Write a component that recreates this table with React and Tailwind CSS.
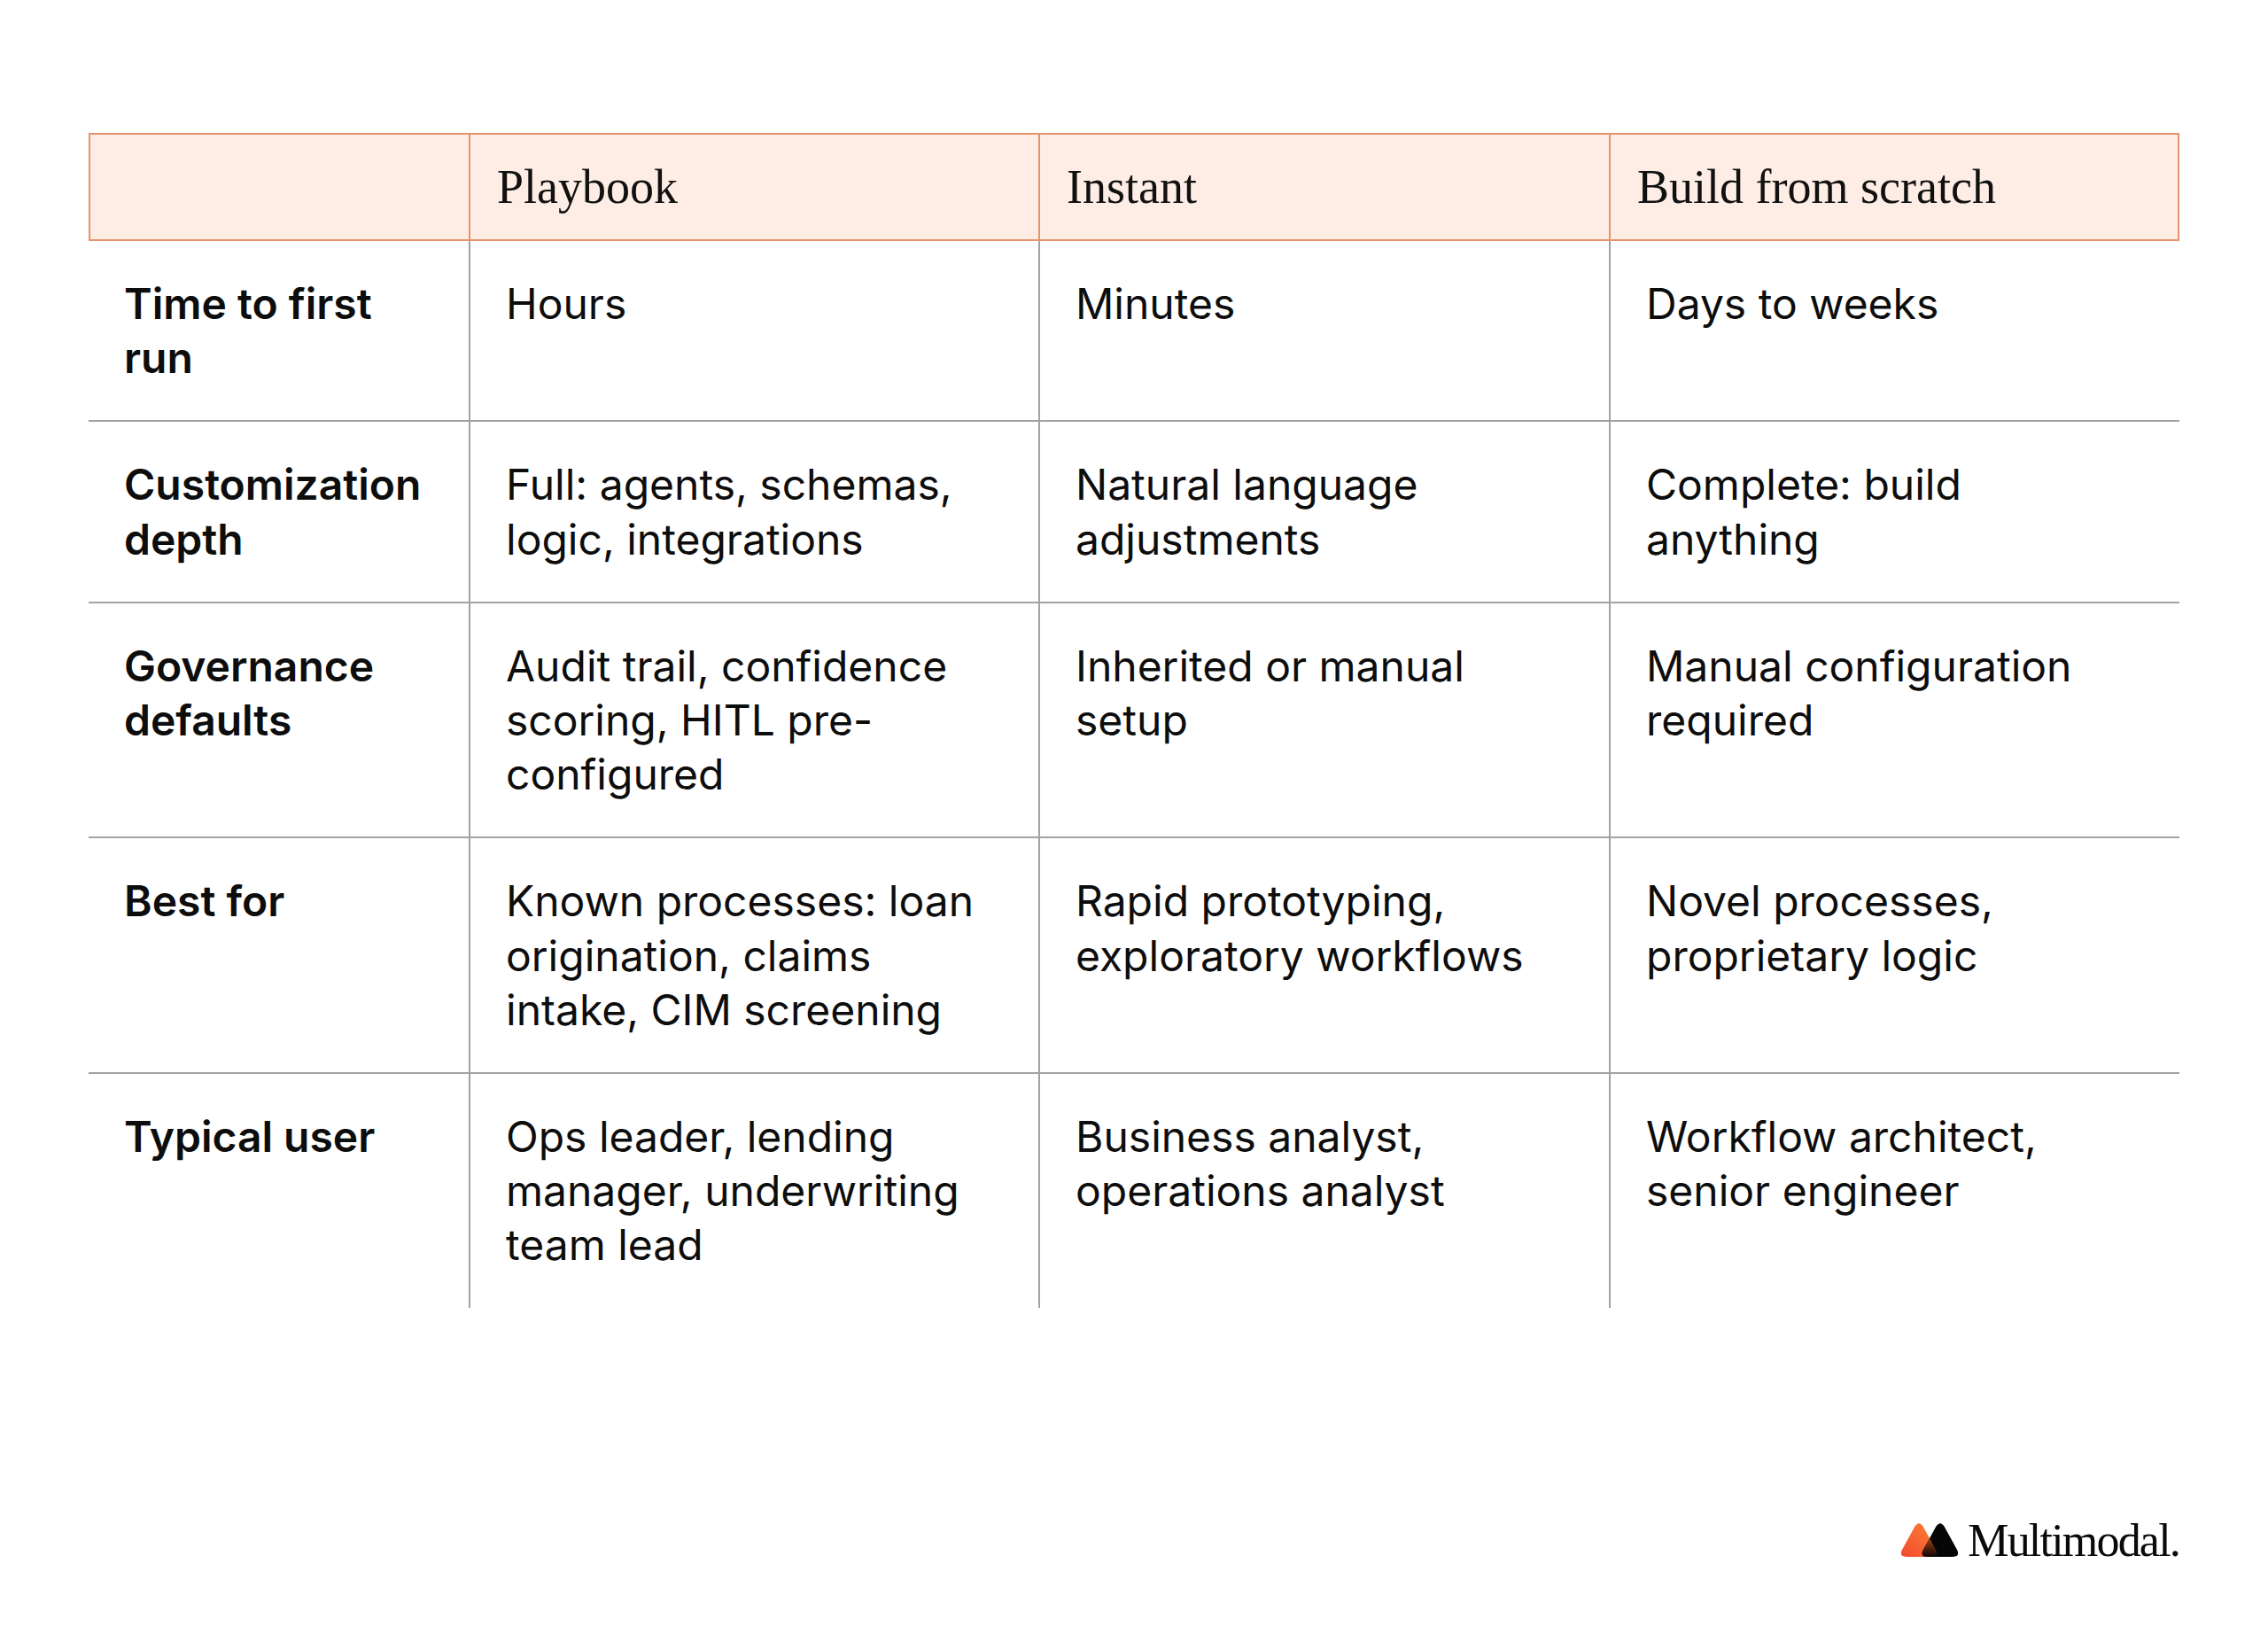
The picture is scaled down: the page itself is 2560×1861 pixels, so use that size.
import React from "react";

const headers = ["Playbook", "Instant", "Build from scratch"];

const rows = [
  {
    label: "Time to first run",
    cells: ["Hours", "Minutes", "Days to weeks"],
  },
  {
    label: "Customization depth",
    cells: [
      "Full: agents, schemas, logic, integrations",
      "Natural language adjustments",
      "Complete: build anything",
    ],
  },
  {
    label: "Governance defaults",
    cells: [
      "Audit trail, confidence scoring, HITL pre-configured",
      "Inherited or manual setup",
      "Manual configuration required",
    ],
  },
  {
    label: "Best for",
    cells: [
      "Known processes: loan origination, claims intake, CIM screening",
      "Rapid prototyping, exploratory workflows",
      "Novel processes, proprietary logic",
    ],
  },
  {
    label: "Typical user",
    cells: [
      "Ops leader, lending manager, underwriting team lead",
      "Business analyst, operations analyst",
      "Workflow architect, senior engineer",
    ],
  },
];

function Logo() {
  const tri =
    "M9 40 L33 40 Q42 40 38.12 31.87 L27.03 8.64 Q21 -6 14.97 8.64 L3.88 31.87 Q0 40 9 40 Z";
  return (
    <svg
      width="64"
      height="38"
      viewBox="3 1 57.5 39"
      preserveAspectRatio="none"
      className="block"
    >
      <defs>
        <linearGradient id="og" x1="1" y1="0" x2="0" y2="1">
          <stop offset="0" stopColor="#ff8236" />
          <stop offset="1" stopColor="#f04a2d" />
        </linearGradient>
        <linearGradient id="ov" x1="0" y1="0" x2="0" y2="1">
          <stop offset="0.25" stopColor="#cf6229" />
          <stop offset="0.65" stopColor="#6a2b10" />
          <stop offset="1" stopColor="#100503" />
        </linearGradient>
        <clipPath id="lc">
          <path d={tri} />
        </clipPath>
      </defs>
      <path d={tri} fill="url(#og)" />
      <g transform="translate(21.5 0)">
        <path d={tri} fill="#050505" />
      </g>
      <g clipPath="url(#lc)">
        <g transform="translate(21.5 0)">
          <path d={tri} fill="url(#ov)" />
        </g>
      </g>
    </svg>
  );
}

export default function App() {
  const bodyCols = ["w-[431px]", "w-[643px]", "w-[644px]", "w-[642px]"];
  const headCols = ["w-[429px]", "w-[643px]", "w-[644px]", "w-[640px]"];
  return (
    <div
      className="min-h-[1861px] w-[2560px] bg-white pt-[150px] px-[100px] text-[#0d0d0d]"
      style={{ fontFamily: "Inter, 'Noto Sans', sans-serif" }}
    >
      <div className="w-[2360px]">
        {/* Header */}
        <div className="flex h-[122px] border-2 border-[#e4946c] bg-[#feede4]">
          {["", ...headers].map((h, i) => (
            <div
              key={i}
              className={`${headCols[i]} flex items-center pl-[30px] ${
                i < 3 ? "border-r-2 border-[#e4946c]" : ""
              }`}
            >
              <span
                className="text-[54px] leading-none text-[#111]"
                style={{ fontFamily: "'Liberation Serif', 'Times New Roman', serif" }}
              >
                {h}
              </span>
            </div>
          ))}
        </div>
        {/* Body */}
        {rows.map((r, ri) => (
          <div
            key={ri}
            className={`flex ${
              ri < rows.length - 1 ? "border-b-2 border-[#a2a2a2]" : ""
            }`}
          >
            {[r.label, ...r.cells].map((c, ci) => (
              <div
                key={ci}
                className={`${bodyCols[ci]} pl-10 pr-10 pt-10 pb-10 text-[48px] leading-[61.2px] ${
                  ci === 0 ? "font-semibold" : "font-normal"
                } ${ci < 3 ? "border-r-2 border-[#a2a2a2]" : ""}`}
              >
                {c}
              </div>
            ))}
          </div>
        ))}
      </div>
      <div className="mt-[237px] flex w-[2360px] items-start justify-end">
        <div className="mt-[6px]">
          <Logo />
        </div>
        <span
          className="ml-[11px] text-[52px] leading-[52px] tracking-[-1.8px] text-[#0a0a0a]"
          style={{ fontFamily: "'Liberation Serif', 'Times New Roman', serif" }}
        >
          Multimodal.
        </span>
      </div>
    </div>
  );
}
